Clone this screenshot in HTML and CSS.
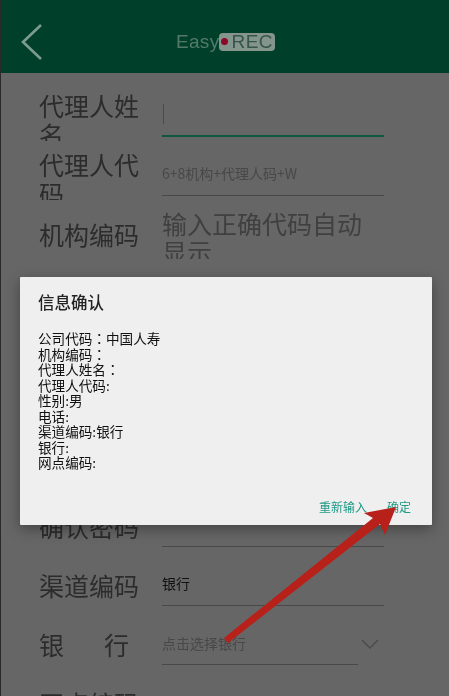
FILE: index.html
```html
<!DOCTYPE html>
<html lang="zh">
<head>
<meta charset="utf-8">
<title>EasyREC</title>
<link rel="stylesheet" href="styles.css">
</head>
<body>
<div class="page">
  <header class="topbar">
    <svg class="back" width="26" height="40" viewBox="0 0 26 40" aria-hidden="true"><path d="M21 3 L3 20 L21 37" fill="none" stroke="#7d9c91" stroke-width="2.6"/></svg>
    <div class="logo"><span class="logo-easy">Easy</span><span class="logo-pill"><i class="logo-dot"></i>REC</span></div>
  </header>
  <main class="form">
    <div class="row">
      <div class="label">代理人姓名</div>
      <div class="field field-active"><i class="cursor"></i></div>
    </div>
    <div class="row">
      <div class="label">代理人代码</div>
      <div class="field hint">6+8机构+代理人码+W</div>
    </div>
    <div class="row">
      <div class="label label-single">机构编码</div>
      <div class="auto">输入正确代码自动显示</div>
    </div>
    <div class="covered"></div>
    <div class="row">
      <div class="label label-single">确认密码</div>
      <div class="field"></div>
    </div>
    <div class="row">
      <div class="label label-single">渠道编码</div>
      <div class="field value">银行</div>
    </div>
    <div class="row">
      <div class="label label-single label-wide">银行</div>
      <div class="select">
        <div class="field field-short hint">点击选择银行</div>
        <svg class="chevron" width="18" height="10" viewBox="0 0 18 10" aria-hidden="true"><path d="M1 1 L9 9 L17 1" fill="none" stroke="#4a4a4a" stroke-width="1.4"/></svg>
      </div>
    </div>
    <div class="row">
      <div class="label label-single">网点编码</div>
    </div>
  </main>
  <section class="dialog">
    <h2 class="dialog-title">信息确认</h2>
    <div class="dialog-body">
      <div>公司代码<span class="colon" lang="zh-Hant">：</span>中国人寿</div>
      <div>机构编码<span class="colon" lang="zh-Hant">：</span></div>
      <div>代理人姓名<span class="colon" lang="zh-Hant">：</span></div>
      <div>代理人代码:</div>
      <div>性别:男</div>
      <div>电话:</div>
      <div>渠道编码:银行</div>
      <div>银行:</div>
      <div>网点编码:</div>
    </div>
    <div class="dialog-actions"><span>重新输入</span><span>确定</span></div>
  </section>
  <svg class="arrow" width="449" height="696" viewBox="0 0 449 696" aria-hidden="true">
    <polygon fill="#b8201a" points="224,638 373,518 364,513 396,507 385,535 380,524 228,643"/>
  </svg>
</div>
</body>
</html>
```
FILE: styles.css
```css
* { box-sizing: border-box; }
html, body { margin: 0; padding: 0; }
body { background: #666; font-family: "Noto Sans CJK SC", "Noto Sans", sans-serif; }
.page {
  position: relative;
  width: 449px;
  height: 696px;
  overflow: hidden;
  background: #666;
  border-left: 1px solid #2a2a2a;
  filter: blur(.45px);
}
.topbar {
  display: flex;
  align-items: center;
  height: 73px;
  padding-left: 19px;
  background: #00402a;
}
.back { margin-top: 10px; }
.logo {
  display: flex;
  align-items: center;
  margin-left: 130px;
  margin-top: 10px;
  height: 18px;
  font-family: "Liberation Sans", sans-serif;
  font-size: 19px;
}
.logo-easy { color: #54796b; letter-spacing: .3px; }
.logo-pill {
  display: flex;
  align-items: center;
  height: 18px;
  padding: 0 2px 0 2px;
  border-radius: 4px;
  background: #84958e;
  color: #37554a;
  letter-spacing: .5px;
}
.logo-dot {
  width: 7px;
  height: 7px;
  margin-right: 3px;
  border-radius: 50%;
  background: #8c0a28;
}
.form { padding: 18px 0 0 38px; }
.row { display: flex; height: 59px; }
.label {
  flex: none;
  width: 101px;
  height: 50px;
  overflow: hidden;
  font-size: 25px;
  line-height: 29px;
  color: #2c2c2c;
}
.label-single { line-height: 50px; }
.label-wide { letter-spacing: 40px; white-space: nowrap; width: 122px; margin-right: -21px; }
.field {
  width: 222px;
  height: 50px;
  margin-top: -4px;
  margin-left: 22px;
  padding-top: 5px;
  display: flex;
  align-items: center;
  border-bottom: 1px solid #494949;
}
.field-active { border-bottom: 2px solid #0f5742; }
.cursor { width: 1px; height: 20px; background: #3f4f49; margin-left: 1px; }
.hint { font-size: 14px; color: #484848; white-space: nowrap; }
.value { font-size: 14px; color: #111; }
.auto {
  width: 222px;
  height: 50px;
  margin-left: 22px;
  overflow: hidden;
  font-size: 25px;
  line-height: 28px;
  color: #404040;
}
.covered { height: 233px; }
.select { display: flex; align-items: flex-start; }
.field-short { width: 196px; padding-top: 7px; }
.chevron { margin-left: 3px; margin-top: 20px; }
.dialog {
  position: absolute;
  left: 19px;
  top: 277px;
  width: 412px;
  height: 248px;
  display: flex;
  flex-direction: column;
  padding: 13px 21px 9px 18px;
  background: #efeff0;
  border-radius: 1px;
  box-shadow: 0 4px 14px rgba(0, 0, 0, .35);
}
.dialog-title {
  margin: 0;
  font-size: 16.5px;
  line-height: 24px;
  font-weight: 500;
  color: #222;
}
.dialog-body {
  margin-top: 17px;
  font-size: 13.6px;
  line-height: 15.55px;
  color: #111;
}
.colon { font-family: "Noto Sans CJK TC", sans-serif; }
.dialog-actions {
  display: flex;
  justify-content: flex-end;
  gap: 20px;
  margin-top: auto;
  font-size: 12px;
  line-height: 18px;
  color: #1f9a85;
}
.arrow { position: absolute; left: -1px; top: 0; pointer-events: none; }
```
